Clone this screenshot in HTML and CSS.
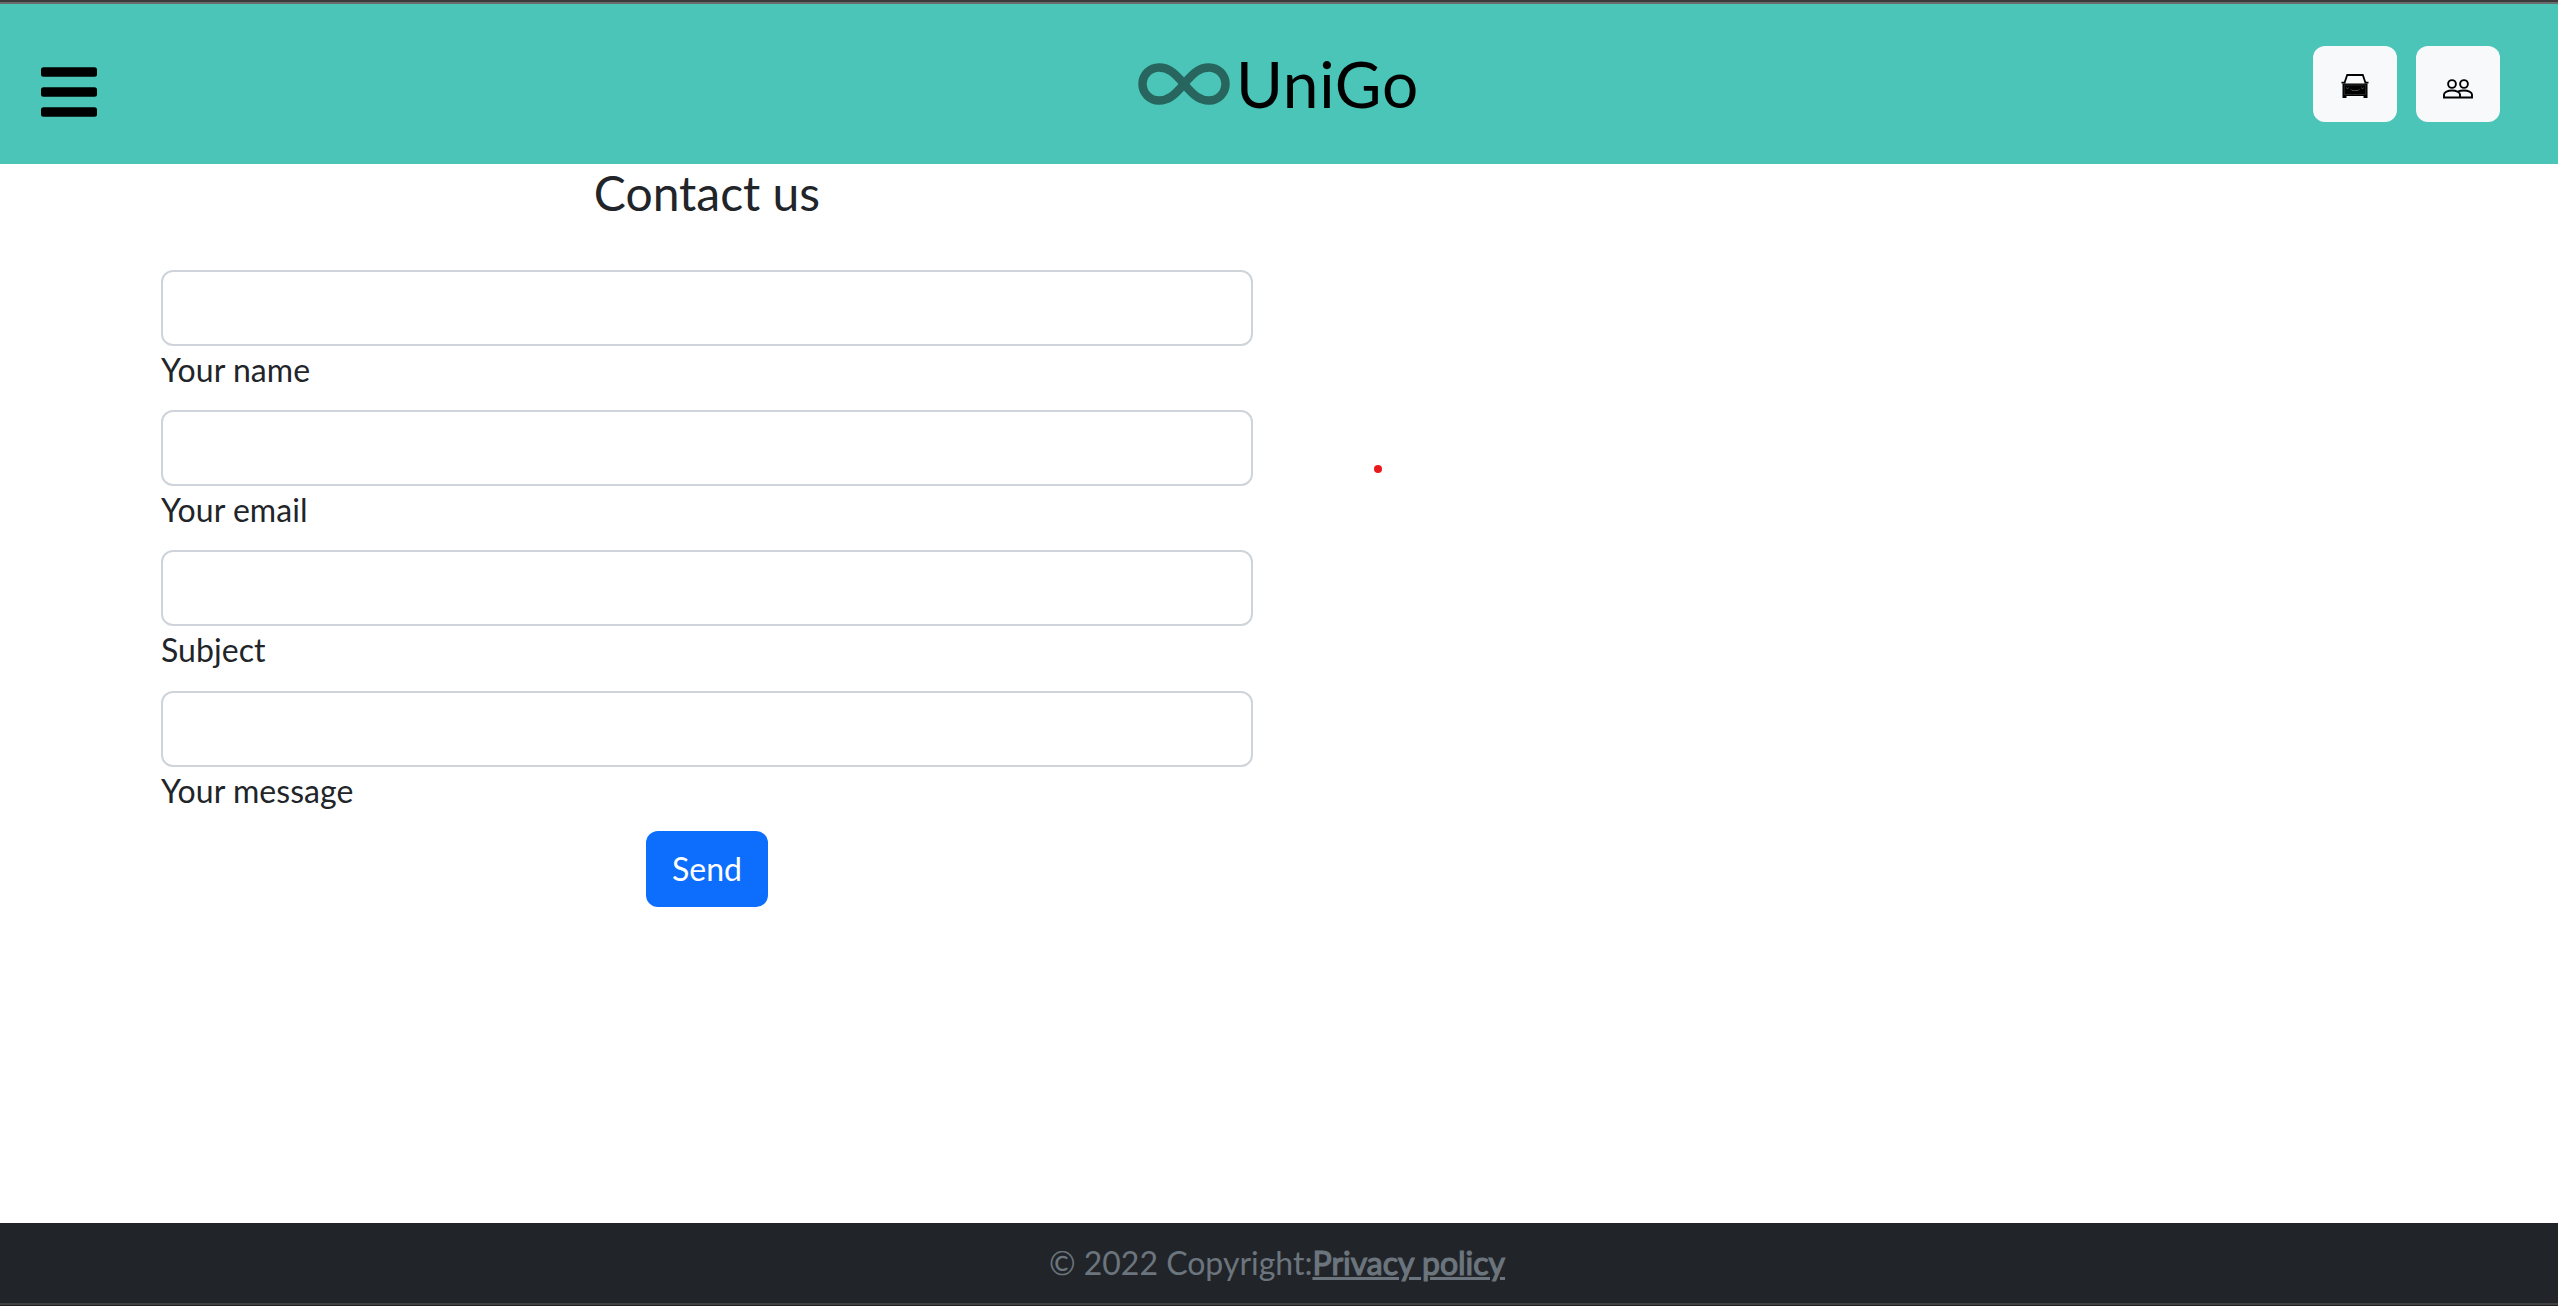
FILE: index.html
```html
<!DOCTYPE html>
<html lang="en">
<head>
<meta charset="utf-8">
<title>UniGo - Contact us</title>
<link rel="stylesheet" href="styles.css">
</head>
<body>
<header class="navbar">
  <button class="menu" aria-label="Menu">
    <svg width="56" height="50" viewBox="0 0 56 50"><rect y=".3" width="56" height="9.500" rx="2.500"/><rect y="20.300" width="56" height="9.500" rx="2.500"/><rect y="40.300" width="56" height="9.500" rx="2.500"/></svg>
  </button>
  <a class="brand">
    <svg class="brand-mark" width="92" height="42" viewBox="0 0 92 42"><path d="M46 21C36 9 30 4.5 21 4.5a16.5 16.5 0 0 0 0 33C30 37.500 36 33 46 21S62 4.500 71 4.500a16.500 16.500 0 0 1 0 33C62 37.500 56 33 46 21Z" fill="none" stroke="#27655e" stroke-width="8.500"/></svg>
    <span>UniGo</span>
  </a>
  <nav class="actions">
    <button class="btn-light" aria-label="Rides">
      <svg width="28" height="24" viewBox="0 0 28 24"><path d="M3.300 9.500 6.200 1h15.600l2.900 8.500M.5 8.700h4M23.500 8.700h4" fill="none" stroke="#000" stroke-width="1.800"/><path d="M1.500 9.500h25V24h-4v-2h-17v2h-4z"/><path d="M3.300 11h21.400v9.500H3.300z" fill="none" stroke="#444" stroke-width=".6"/><path d="M5.500 13.500l1 1.500 1-1.500M20.500 13.500l1 1.500 1-1.500M9.500 15l1.500 1.500h6l1.500-1.500" fill="none" stroke="#777" stroke-width=".6"/></svg>
    </button>
    <button class="btn-light" aria-label="People">
      <svg class="people" width="30" height="20" viewBox="0 0 30 20" fill="none" stroke="#000" stroke-width="1.900"><circle cx="9" cy="5" r="3.900"/><circle cx="21" cy="5" r="3.900"/><path d="M1 18.500v-3c0-2.500 4-4 8-4s8 1.500 8 4v3zM15 12.500c1.500-.7 3.500-1 6-1 4 0 8 1.500 8 4v3H17"/></svg>
    </button>
  </nav>
</header>
<main class="content">
  <form class="contact">
    <h4 class="title">Contact us</h4>
    <div class="field"><input id="name" type="text"><label for="name">Your name</label></div>
    <div class="field"><input id="email" type="text"><label for="email">Your email</label></div>
    <div class="field"><input id="subject" type="text"><label for="subject">Subject</label></div>
    <div class="field"><input id="message" type="text"><label for="message">Your message</label></div>
    <button class="send" type="button">Send</button>
  </form>
  <span class="dot"></span>
</main>
<footer class="footer"><span>© 2022 Copyright:</span><a class="policy">Privacy policy</a></footer>
</body>
</html>
```
FILE: styles.css
```css
* { box-sizing: border-box; }
body {
  margin: 0;
  height: 1306px;
  display: flex;
  flex-direction: column;
  font: 32px/48px Lato, sans-serif;
  color: #212529;
  background: #fff;
}
button { border: 0; padding: 0; font: inherit; }
svg { display: block; }
.navbar {
  height: 164px;
  display: grid;
  grid-template-columns: 1fr auto 1fr;
  align-items: start;
  background: #4ac5b7;
  border-top: 2px solid #3b3b3b;
  box-shadow: inset 0 2px #6b6b6b;
  padding: 0 41px 0 41px;
}
.menu { justify-self: start; margin-top: 65px; background: none; }
.brand { display: flex; align-items: flex-start; color: #000; font-size: 64px; line-height: 96px; letter-spacing: 0.8px; margin-top: 34px; }
.brand-mark { margin: 27px 6px 0 -1px; }
.actions { justify-self: end; display: flex; gap: 19px; margin: 44px 17px 0 0; }
.btn-light {
  width: 84px;
  height: 76px;
  border-radius: 12px;
  background: #f8f9fa;
  display: flex;
  align-items: center;
  justify-content: center;
  padding-top: 4px;
}
.people { margin-top: 5px; }
.content { flex: 1; display: flex; align-items: flex-start; padding-left: 161px; }
.contact { width: 1092px; display: flex; flex-direction: column; }
.title { margin: 0 0 48px; font-size: 48px; font-weight: 400; line-height: 58px; text-align: center; }
.field { display: flex; flex-direction: column; margin-bottom: 16.2px; }
.field label { letter-spacing: 0.06px; }
.field input {
  height: 76px;
  border: 2px solid #ced4da;
  border-radius: 12px;
  padding: 12px 24px;
  font: inherit;
}
.send {
  align-self: center;
  width: 122px;
  height: 76px;
  border-radius: 12px;
  background: #0d6efd;
  color: #fff;
}
.dot { width: 8px; height: 8px; border-radius: 50%; background: #e9191c; margin: 301px 0 0 121px; }
.footer {
  height: 83px;
  display: flex;
  justify-content: center;
  padding: 16px 4px 0 0;
  background: #212529;
  color: #6c757d;
  border-bottom: 1px solid #241f21;
  box-shadow: inset 0 -2px #414141;
}
.policy { text-decoration: underline; -webkit-text-stroke: 1.2px #6c757d; }
```
